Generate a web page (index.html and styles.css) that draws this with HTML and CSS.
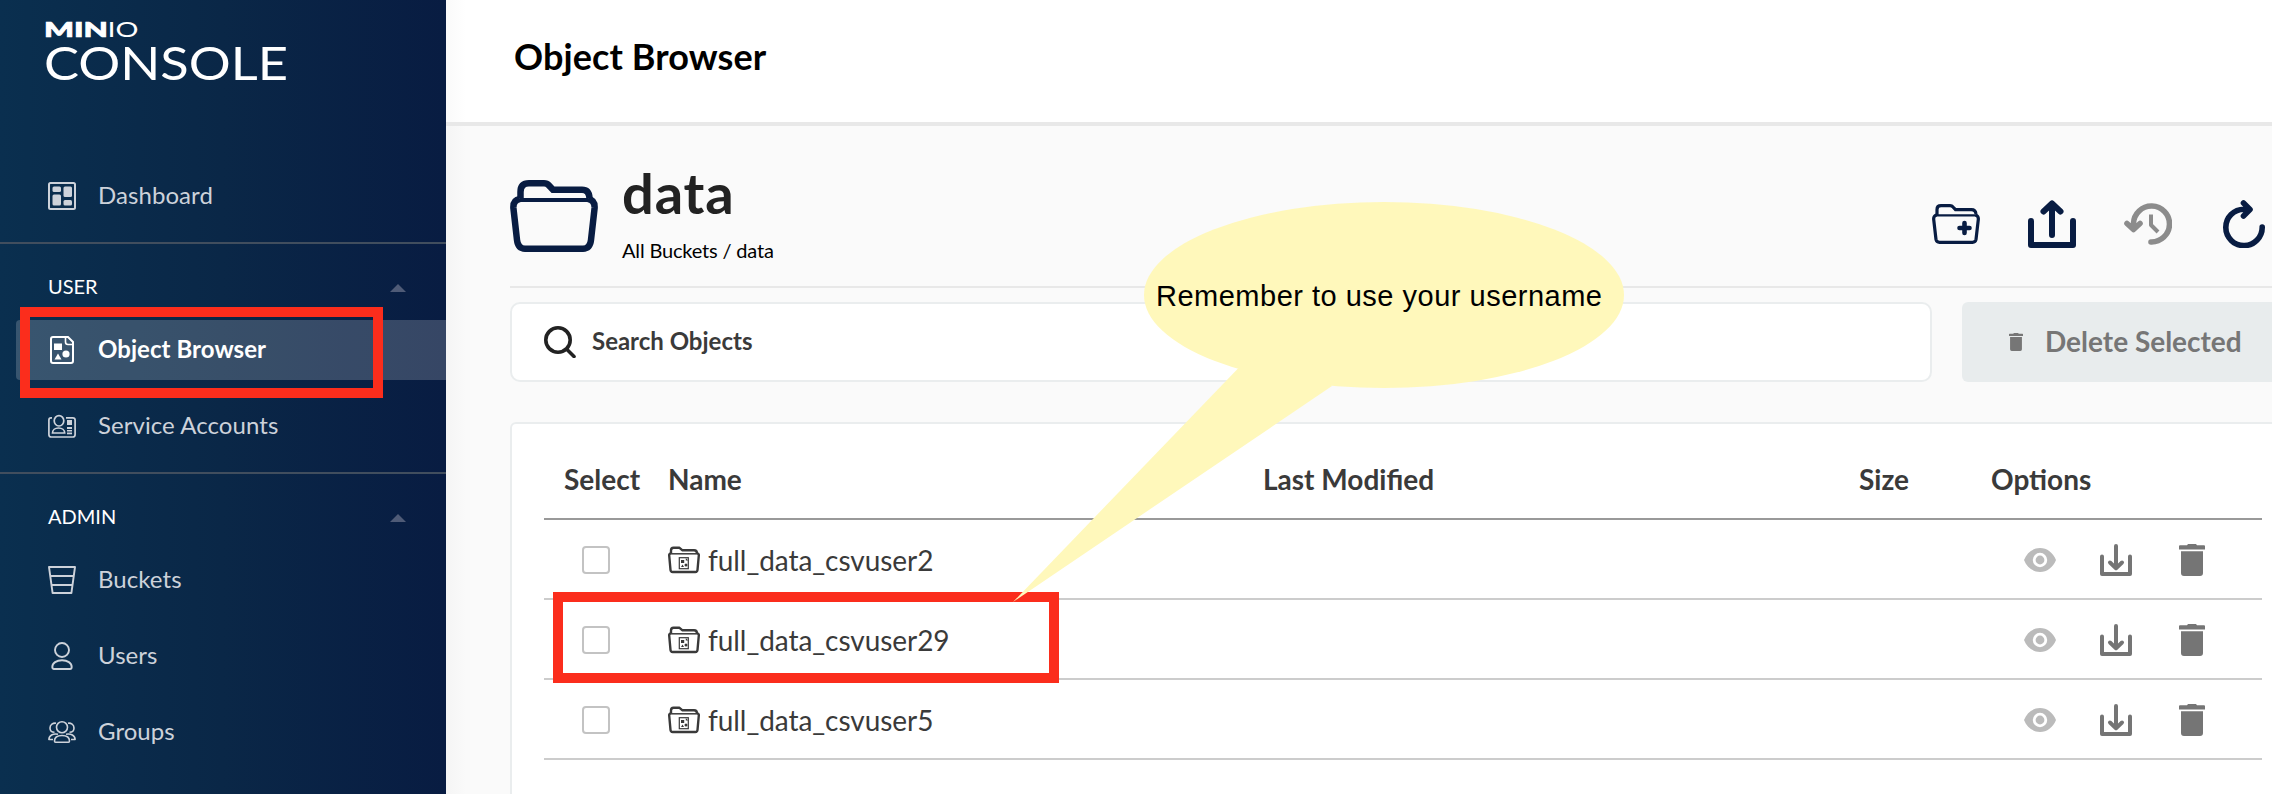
FILE: index.html
```html
<!DOCTYPE html>
<html lang="en">
<head>
<meta charset="utf-8">
<title>MinIO Console</title>
<link rel="stylesheet" href="styles.css">
</head>
<body>
<svg class="defs" aria-hidden="true">
  <symbol id="row-folder" viewBox="0 0 32 28">
    <g fill="none" stroke="#3a3a3a" stroke-width="2.4" stroke-linejoin="round">
      <path d="M3 7.500V4.500Q3 1.800 5.500 1.800H11.500L14.500 4.300H26Q29 4.300 29 7.500"/>
      <path d="M3 7.500Q1 7.500 1.200 9.500L2.500 24Q2.700 26 4.700 26H27.300Q29.300 26 29.500 24L30.800 9.500Q31 7.500 29 7.500"/>
      <path d="M3 7.800H29" stroke-width="1.500"/>
    </g>
    <rect x="11.300" y="11.700" width="9" height="11" fill="none" stroke="#3a3a3a" stroke-width="1.200"/>
    <path d="M13 14h3.200v3H13zM13 21l1.500-2.600L16 21zM17.800 12v2.600h2.500" fill="#3a3a3a"/>
    <circle cx="18" cy="19" r="1.500" fill="#3a3a3a"/>
  </symbol>
  <symbol id="eye" viewBox="0 0 32 24">
    <path fill="#bbb" fill-rule="evenodd" d="M0 12C3 4.500 9 0 16 0s13 4.500 16 12c-3 7.500-9 12-16 12S3 19.500 0 12zM16 4.800a7.200 7.200 0 1 0 0 14.400a7.200 7.200 0 0 0 0-14.400zM16 7.600a4.400 4.400 0 1 1 0 8.800a4.400 4.400 0 0 1 0-8.800z"/>
  </symbol>
  <symbol id="download" viewBox="0 0 32 32">
    <path d="M2 12.500V30H30V12.500M16 2V24M10 18.500L16 24.200L22 18.500" fill="none" stroke="#757575" stroke-width="4" stroke-linecap="round" stroke-linejoin="round"/>
  </symbol>
  <symbol id="trash" viewBox="0 0 26 32">
    <path d="M1 1.300H8L9 0H17L18 1.300H25Q26 1.300 26 2.300V5.500H0V2.300Q0 1.300 1 1.300zM2 7.300H24V29Q24 32 21 32H5Q2 32 2 29z"/>
  </symbol>
</svg>

<div class="app">
  <nav class="sidebar">
    <div class="logo">
      <svg width="244" height="64" viewBox="0 0 244 64" fill="#fff">
        <text class="logo-min" x="-2" y="17" textLength="64" lengthAdjust="spacingAndGlyphs">MIN</text>
        <text class="logo-io" x="61.500" y="17" textLength="31" lengthAdjust="spacingAndGlyphs">IO</text>
        <text class="logo-console" x="-2" y="60" textLength="244" lengthAdjust="spacingAndGlyphs">CONSOLE</text>
      </svg>
    </div>
    <a class="item">
      <svg class="icon" viewBox="0 0 28 28"><rect x="1" y="1" width="26" height="26" rx="1.500" fill="none" stroke="currentColor" stroke-width="2"/><g fill="currentColor"><rect x="4.500" y="4.500" width="8.500" height="5.500" rx="1.500"/><rect x="15.500" y="4.500" width="8.500" height="10.500" rx="1.500"/><rect x="4.500" y="12.500" width="8.500" height="11" rx="1.500"/><rect x="15.500" y="18" width="8.500" height="5.500" rx="1.500"/></g></svg>
      <span>Dashboard</span>
    </a>
    <div class="group">
      <div class="group-title"><span>USER</span><i class="caret"></i></div>
      <a class="item active">
        <svg class="icon" viewBox="0 0 28 28"><g fill="none" stroke="currentColor" stroke-width="2"><path d="M5 1H20L25 6V25Q25 27 23 27H5Q3 27 3 25V3Q3 1 5 1Z"/><path d="M17.500 1V6Q17.500 8.500 20 8.500H25" stroke-width="1.600"/></g><g fill="currentColor"><rect x="6" y="7.500" width="8" height="6.500"/><circle cx="18" cy="18" r="3.600"/><path d="M6.500 23.500L10 17.500L13.500 23.500Z"/></g></svg>
        <span>Object Browser</span>
      </a>
      <a class="item">
        <svg class="icon" viewBox="0 0 28 28"><g fill="none" stroke="currentColor" stroke-width="1.700"><path d="M4 5.800H3Q.9 5.800 .9 8V22.500Q.9 25 3.300 25H24.700Q27.100 25 27.100 22.500V8Q27.100 5.800 24.700 5.800H18"/><ellipse cx="11" cy="8.800" rx="4.800" ry="5.200"/><path d="M4.500 21C4.500 18 7 16 10.500 16S16.700 18 16.700 21Z"/></g><g fill="currentColor"><rect x="19" y="8" width="5" height="5"/><rect x="19" y="15" width="5" height="2"/><rect x="19" y="18" width="5" height="1.500"/><rect x="19" y="20.500" width="5" height="1.800"/></g></svg>
        <span>Service Accounts</span>
      </a>
    </div>
    <div class="group">
      <div class="group-title"><span>ADMIN</span><i class="caret"></i></div>
      <a class="item">
        <svg class="icon" viewBox="0 0 28 28"><g fill="none" stroke="currentColor" stroke-width="1.900" stroke-linejoin="round"><path d="M1 1H27L23.400 27H4.600Z"/><path d="M2.500 10H25.500M3.700 19H24.300"/></g></svg>
        <span>Buckets</span>
      </a>
      <a class="item">
        <svg class="icon" viewBox="0 0 28 28"><g fill="none" stroke="currentColor" stroke-width="1.900" stroke-linejoin="round"><circle cx="14" cy="8" r="7"/><path d="M4.300 25C4.300 21 8.500 18.300 14 18.300S23.700 21 23.700 25Q23.700 27 22 27H6Q4.300 27 4.300 25Z"/></g></svg>
        <span>Users</span>
      </a>
      <a class="item">
        <svg class="icon" viewBox="0 0 28 28"><g fill="none" stroke="currentColor" stroke-width="1.600" stroke-linejoin="round"><circle cx="14" cy="9.300" r="5.500"/><path d="M6.500 23C6.500 19.500 9.500 17.500 14 17.500S21.500 19.500 21.500 23Q21.500 24.200 20.500 24.200H7.500Q6.500 24.200 6.500 23Z"/><path d="M8 5.200C5 4.800 2 6.500 2 10C2 12.500 3.500 14.300 6.500 14.300M20 5.200C23 4.800 26 6.500 26 10C26 12.500 24.500 14.300 21.500 14.300M10 16.300C5 15.300 1 17.500 .9 21.500H5M18 16.300C23 15.300 27 17.500 27.100 21.500H23"/></g></svg>
        <span>Groups</span>
      </a>
    </div>
  </nav>

  <main class="main">
    <header class="page-header"><h1>Object Browser</h1></header>
    <section class="bucket">
      <svg class="bucket-icon" width="88" height="72" viewBox="0 0 88 72" fill="none" stroke="#081c42"><path d="M10.500 18V12Q10.500 3.300 19 3.300H34Q37 3.300 39 5.500L43 9.800H72Q79 9.800 79.500 18" stroke-width="6.500"/><path d="M10 20H78" stroke-width="4.200"/><path d="M10 19Q3 20 3.400 28L7 60Q8 68.700 15 68.700H73Q80 68.700 81 60L84.600 28Q85 20 78 19" stroke-width="6.500"/></svg>
      <div class="bucket-text"><h2>data</h2><p>All Buckets / data</p></div>
      <div class="actions">
        <svg width="48" height="48" viewBox="0 0 48 48" fill="none" stroke="#081c42"><path d="M5 15V9.500Q5 5.700 9 5.700H18Q20 5.700 21 7L23.500 9.700H39.500Q43.500 9.700 44 14" stroke-width="3.200"/><path d="M4 15.300H44" stroke-width="2.200"/><path d="M4.500 15Q1.300 16 1.700 19.500L4 39.500Q4.500 42.300 7.500 42.300H40.500Q43.500 42.300 44 39.500L46.300 19.500Q46.700 16 43.500 15" stroke-width="3.200"/><path d="M32.500 23V33M27.500 28H37.500" stroke-width="4.600" stroke-linecap="round"/></svg>
        <svg width="48" height="48" viewBox="0 0 48 48" fill="none" stroke="#081c42" stroke-width="6" stroke-linecap="round" stroke-linejoin="round"><path d="M3 21V45H45V21M24 35V4M15.500 11.500L24 3.500L32.500 11.500"/></svg>
        <svg width="48" height="48" viewBox="0 0 48 48" fill="none" stroke="#8c8c8c" stroke-width="5.600" stroke-linecap="round" stroke-linejoin="round"><path d="M9.500 26V23.500A18 18 0 1 1 27 42M3 23.500L9.500 29.500L16 23.500"/><path d="M27 14.500V25L34 32" stroke-width="4" stroke-linecap="butt"/></svg>
        <svg width="48" height="48" viewBox="0 0 48 48" fill="none" stroke="#081c42" stroke-width="5.600" stroke-linecap="round" stroke-linejoin="round"><path d="M42.200 27A18.200 18.200 0 1 1 24 9.200H28M23.500 3L30 9.500L23.500 16"/></svg>
      </div>
    </section>
    <div class="toolbar">
      <div class="search">
        <svg width="32" height="32" viewBox="0 0 32 32" fill="none" stroke="#222" stroke-width="3.600" stroke-linecap="round"><circle cx="14" cy="14" r="12.200"/><path d="M23 23.500L30 30.500"/></svg>
        <span>Search Objects</span>
      </div>
      <button class="delete"><svg width="14" height="18" viewBox="0 0 26 32" preserveAspectRatio="none" fill="#767676"><use href="#trash" width="26" height="32"/></svg><span>Delete Selected</span></button>
    </div>
    <div class="table">
      <div class="row head"><span class="c-select">Select</span><span class="c-name">Name</span><span class="c-mod">Last Modified</span><span class="c-size">Size</span><span>Options</span></div>
      <div class="row"><i class="check"></i><span class="file"><svg width="32" height="28"><use href="#row-folder"/></svg>full_data_csvuser2</span><span class="opts"><svg width="32" height="24"><use href="#eye"/></svg><svg width="32" height="32"><use href="#download"/></svg><svg width="26" height="32" fill="#757575"><use href="#trash"/></svg></span></div>
      <div class="row"><i class="check"></i><span class="file"><svg width="32" height="28"><use href="#row-folder"/></svg>full_data_csvuser29</span><span class="opts"><svg width="32" height="24"><use href="#eye"/></svg><svg width="32" height="32"><use href="#download"/></svg><svg width="26" height="32" fill="#757575"><use href="#trash"/></svg></span></div>
      <div class="row"><i class="check"></i><span class="file"><svg width="32" height="28"><use href="#row-folder"/></svg>full_data_csvuser5</span><span class="opts"><svg width="32" height="24"><use href="#eye"/></svg><svg width="32" height="32"><use href="#download"/></svg><svg width="26" height="32" fill="#757575"><use href="#trash"/></svg></span></div>
    </div>
  </main>
</div>

<div class="mark mark-nav"></div>
<div class="mark mark-row"></div>
<div class="callout">
  <svg width="612" height="402" viewBox="1012 201 612 402" fill="#fff8bb"><ellipse cx="1384" cy="295" rx="240" ry="93"/><path d="M1237.500 369L1013 602L1332 386L1290 340Z"/></svg>
  <span>Remember to use your username</span>
</div>
</body>
</html>
```
FILE: styles.css
```css
* { box-sizing: border-box; }
body { margin: 0; font-family: Lato, "Liberation Sans", sans-serif; overflow: hidden; }
svg { display: block; flex: none; }
.defs { position: absolute; width: 0; height: 0; }
.app { display: flex; width: 2272px; height: 794px; overflow: hidden; }

.sidebar { flex: none; width: 446px; background: linear-gradient(90deg, #0a2f4f 0%, #0a2747 50%, #081c42 100%); }
.logo { height: 166px; padding: 20px 0 0 46px; }
.logo svg { overflow: visible; }
.logo-min { font-size: 21px; font-weight: 900; stroke: #fff; stroke-width: .7px; }
.logo-io { font-size: 21px; font-weight: 400; }
.logo-console { font-size: 47px; font-weight: 400; }
.item { display: flex; align-items: center; height: 60px; margin: 0 0 16px 16px; padding-left: 32px; gap: 22px; color: #cdd2da; font-size: 24px; line-height: 56px; letter-spacing: .06px; }
.item span { padding-bottom: 2px; }
.icon { width: 28px; height: 28px; }
.active { background: rgba(255, 255, 255, .19); border-radius: 4px 0 0 4px; color: #fff; font-weight: 700; }
.group { border-top: 2px solid #414e5e; }
.group-title { display: flex; align-items: center; justify-content: space-between; height: 76px; padding: 8px 40px 0 48px; color: #fff; font-size: 20px; }
.caret { border: 8px solid transparent; border-top: 0; border-bottom-color: #4f5b77; margin-top: 4px; }

.main { flex: none; width: 1900px; background: linear-gradient(90deg, #f5f5f5, #fafafa 20px); }
.page-header { height: 126px; background: linear-gradient(90deg, #fafafa, #fff 20px); border-bottom: 4px solid #e8e8e8; padding: 34px 0 0 68px; }
h1 { margin: 0; font-size: 36px; line-height: 44px; letter-spacing: .1px; color: #000; }
.bucket { display: flex; height: 162px; margin-left: 64px; border-bottom: 2px solid #e8e8e8; }
.bucket-icon { margin-top: 54px; }
.bucket-text { width: 1310px; margin-left: 24px; }
h2 { margin: 34px 0 0; font-size: 56px; line-height: 66px; letter-spacing: .9px; color: #222; }
p { margin: 12px 0 0; font-size: 20px; line-height: 24px; letter-spacing: -.17px; color: #000; }
.actions { display: flex; gap: 48px; margin-top: 74px; }
.toolbar { display: flex; gap: 30px; height: 80px; margin: 14px 0 0 64px; }
.search { display: flex; align-items: center; width: 1422px; padding-left: 32px; gap: 16px; background: #fff; border: 2px solid #eaedee; border-radius: 10px; font-size: 24px; font-weight: 700; color: #3a3a3a; }
.search span { padding-bottom: 3px; }
.delete { display: flex; align-items: center; gap: 22px; width: 350px; border: 0; border-radius: 6px; padding: 0 0 0 47px; background: #e8eced; color: #767676; font: 700 28px Lato, sans-serif; }
.delete span { padding-bottom: 2px; }
.table { height: 420px; margin: 40px 0 0 64px; padding: 16px 32px 0; background: #fff; border: 2px solid #eaedee; border-radius: 6px; }
.row { display: flex; align-items: center; width: 1718px; height: 80px; padding-top: 2px; border-bottom: 2px solid #ccc; font-size: 28px; color: #3a3a3a; }
.head { border-color: #999; font-weight: 700; padding: 0 0 0 20px; }
.c-select { width: 104px; }
.c-name { width: 595px; }
.c-mod { width: 596px; }
.c-size { width: 132px; }
.check { width: 28px; height: 28px; margin: 0 58px 0 38px; border: 2px solid #c3c3c3; border-radius: 4px; }
.file { display: flex; align-items: center; gap: 8px; width: 1356px; letter-spacing: -.06px; }
.opts { display: flex; align-items: center; }
.opts svg + svg { margin-left: 44px; }
.opts svg + svg + svg { margin-left: 47px; }

.mark { position: absolute; border: 10px solid #fb2d1c; }
.mark-nav { left: 20px; top: 307px; width: 363px; height: 91px; }
.mark-row { left: 553px; top: 592px; width: 506px; height: 91px; }
.callout { position: absolute; left: 1012px; top: 201px; }
.callout span { position: absolute; left: 144px; top: 77px; font: 29px/36px "Liberation Sans", sans-serif; letter-spacing: .5px; white-space: nowrap; color: #000; }
```
